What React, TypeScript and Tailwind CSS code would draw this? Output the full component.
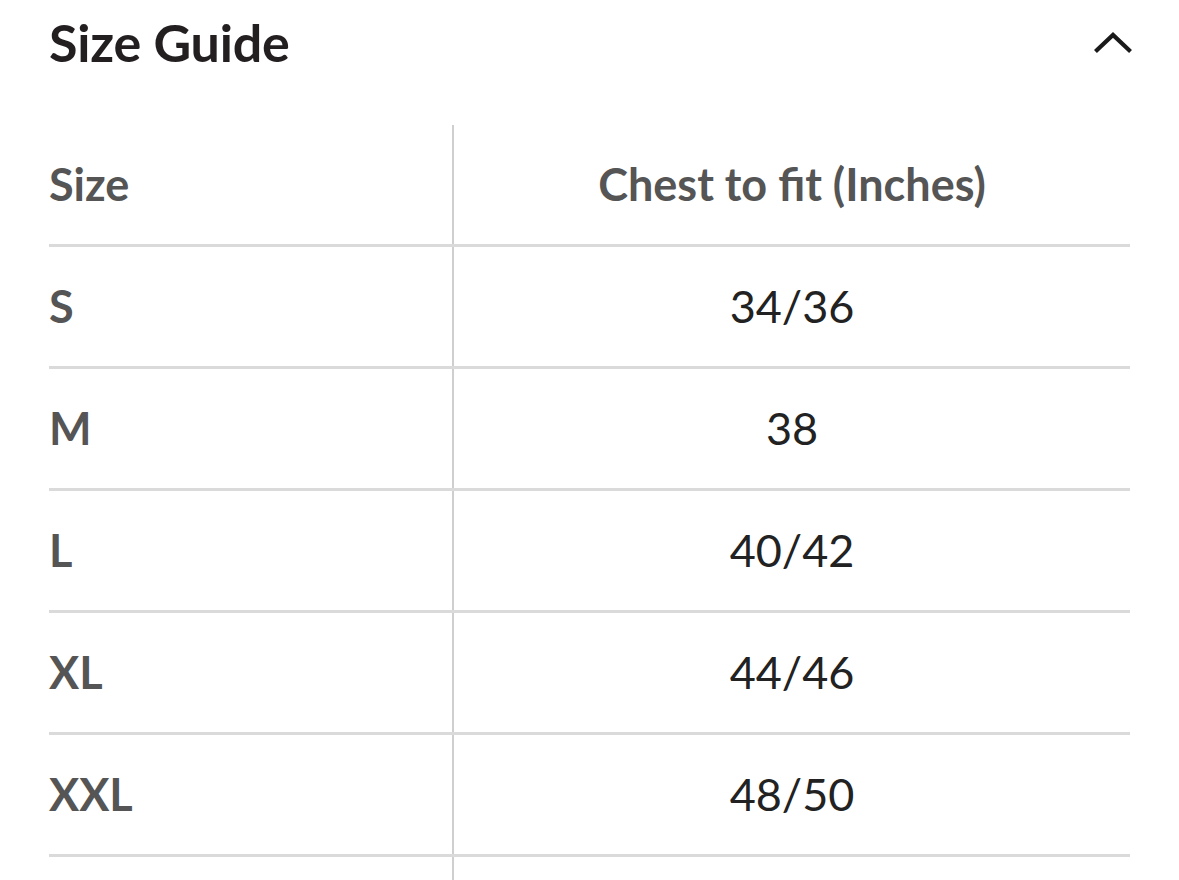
const rows = [
  { size: 'S', chest: '34/36' },
  { size: 'M', chest: '38' },
  { size: 'L', chest: '40/42' },
  { size: 'XL', chest: '44/46' },
  { size: 'XXL', chest: '48/50' },
  { size: '', chest: '' },
];

export default function App() {
  return (
    <div className="h-[880px] overflow-hidden bg-white px-[49px] font-['Lato','Liberation_Sans',sans-serif]">
      {/* Accordion header */}
      <div className="flex h-[84px] items-center justify-between">
        <h2 className="text-[52px] font-bold leading-none tracking-[-0.2px] text-[#231f20]">Size Guide</h2>
        <svg className="mr-[-2px] h-[22px] w-[38px]" viewBox="0 0 38 22" fill="none">
          <path d="M3 19 L19 4 L35 19" stroke="#1a1a1a" strokeWidth="4.2" strokeLinecap="square" />
        </svg>
      </div>

      {/* Table */}
      <div className="mt-[41px]">
        <div className="flex h-[122px] border-b-[3px] border-[#dadada]">
          <div className="flex w-[405px] items-center border-r-2 border-[#cfcfcf] text-[45px] font-bold text-[#555555]">
            Size
          </div>
          <div className="flex flex-1 items-center justify-center text-[45px] font-bold text-[#555555]">
            Chest to fit (Inches)
          </div>
        </div>
        {rows.map((r, i) => (
          <div key={i} className="flex h-[122px] border-b-[3px] border-[#dadada]">
            <div className="flex w-[405px] items-center border-r-2 border-[#cfcfcf] text-[45px] font-bold text-[#555555]">
              {r.size}
            </div>
            <div className="flex flex-1 items-center justify-center text-[45px] text-[#222222]">
              {r.chest}
            </div>
          </div>
        ))}
      </div>
    </div>
  );
}
